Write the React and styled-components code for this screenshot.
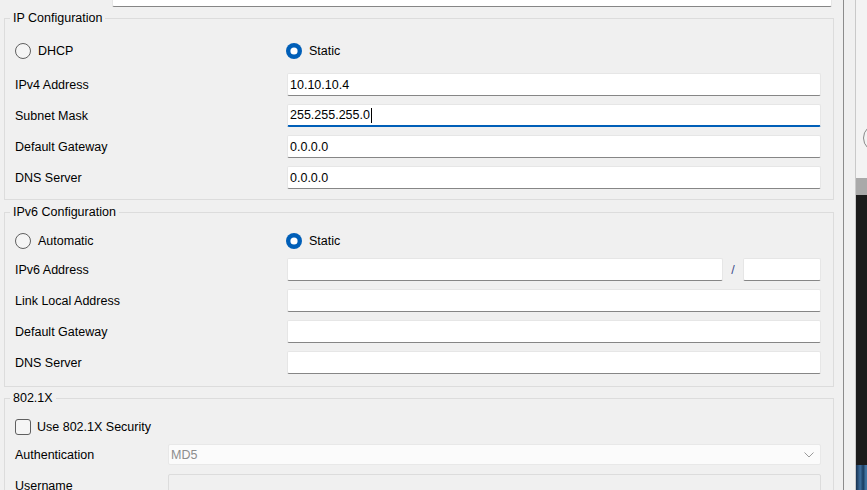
import styled, { createGlobalStyle } from "styled-components";

const GlobalStyle = createGlobalStyle`
  html, body {
    margin: 0;
    padding: 0;
    background: #f0f0f0;
    overflow: hidden;
  }
  body {
    font-family: "Liberation Sans", Arial, sans-serif;
    font-size: 12.5px;
    color: #000;
  }
`;

const Screen = styled.div`
  display: flex;
  width: 867px;
  height: 490px;
  overflow: hidden;
  background: #f0f0f0;
`;

const Dialog = styled.div`
  width: 844px;
  flex-shrink: 0;
  box-sizing: border-box;
  border-right: 1px solid #8c8c8c;
  padding: 0 9px 0 4px;
`;

const Gutter = styled.div`
  width: 11px;
  flex-shrink: 0;
`;

const BackWindow = styled.div`
  flex: 1;
  display: flex;
  flex-direction: column;
  border-left: 1px solid #c9c9c9;
`;

const BackTop = styled.div`
  height: 178px;
  background: #f3f3f3;
  padding-top: 123px;
  box-sizing: border-box;
`;

const BackBar = styled.div`
  height: 17px;
  background: #a9a9a9;
`;

const BackDark = styled.div`
  height: 270px;
  background: #1b1b1b;
`;

const BackImage = styled.div`
  flex: 1;
  background: linear-gradient(90deg, #16304f 0%, #3d6d9c 35%, #1a3a5e 60%, #4a7fb0 85%, #1c3756 100%);
`;

const TopRow = styled.div`
  height: 7px;
  overflow: hidden;
  display: flex;
  align-items: flex-end;
  padding-left: 11px;
`;

const TopLabel = styled.div`
  width: 97px;
  flex-shrink: 0;
  line-height: 23px;
`;

const Group = styled.fieldset`
  margin: ${(p) => p.$mt}px 0 0;
  padding: ${(p) => p.$pt}px 12px ${(p) => p.$pb}px 10px;
  border: 1px solid #dcdcdc;
  min-width: 0;
`;

const Legend = styled.legend`
  padding: 0 3px;
  margin-left: -5px;
  line-height: 15px;
  font-size: 12.5px;
`;

const OptionRow = styled.div`
  display: grid;
  grid-template-columns: ${(p) => p.$labelW}px 1fr;
  align-items: center;
  height: 20px;
  margin-bottom: ${(p) => p.$mb}px;
`;

const FormGrid = styled.div`
  display: grid;
  grid-template-columns: ${(p) => p.$labelW}px 1fr;
  row-gap: ${(p) => p.$gap || 8}px;
  align-items: center;
`;

const Label = styled.div`
  white-space: nowrap;
`;

const Option = styled.label`
  display: flex;
  align-items: center;
  gap: ${(p) => p.$gap || 7}px;
  margin-left: ${(p) => p.$ml || 0}px;
`;

const Field = styled.div`
  height: ${(p) => p.$h || 23}px;
  box-sizing: border-box;
  display: flex;
  align-items: center;
  padding-left: 2px;
  background: ${(p) => (p.$disabled ? "#f0f0f0" : "#fff")};
  border: 1px solid ${(p) => (p.$disabled ? "#dcdcdc" : "#e6e6e6")};
  border-bottom: ${(p) =>
    p.$focused
      ? "2px solid #005fb8"
      : p.$disabled
      ? "1px solid #dcdcdc"
      : "1px solid #868686"};
  border-radius: 2px;
  white-space: nowrap;
  overflow: hidden;
  flex: ${(p) => (p.$w ? "none" : "1")};
  width: ${(p) => (p.$w ? `${p.$w}px` : "auto")};
`;

const Caret = styled.span`
  display: inline-block;
  width: 1px;
  height: 15px;
  background: #000;
  margin-left: 1px;
`;

const SplitCell = styled.div`
  display: flex;
  align-items: center;
`;

const Slash = styled.span`
  width: 20px;
  text-align: center;
  color: #3a4a8a;
`;

const Select = styled.div`
  height: 21px;
  box-sizing: border-box;
  display: flex;
  align-items: center;
  justify-content: space-between;
  padding: 0 6px 0 2px;
  background: #fbfbfb;
  border: 1px solid #e8e8e8;
  border-radius: 2px;
  color: #8d8d8d;
`;

const CheckBox = styled.span`
  width: 16px;
  height: 16px;
  box-sizing: border-box;
  border: 1px solid #5f5f5f;
  border-radius: 3px;
  background: #f5f5f5;
`;

const Radio = ({ checked }) => (
  <svg width="16" height="16" viewBox="0 0 16 16">
    {checked ? (
      <>
        <circle cx="8" cy="8" r="8" fill="#005fb8" />
        <circle cx="8" cy="8" r="3.6" fill="#fff" />
      </>
    ) : (
      <circle cx="8" cy="8" r="7.5" fill="#f5f5f5" stroke="#5f5f5f" strokeWidth="1" />
    )}
  </svg>
);

const Chevron = () => (
  <svg width="10" height="6" viewBox="0 0 10 6">
    <path d="M0.5 0.5 L5 5 L9.5 0.5" fill="none" stroke="#9a9a9a" strokeWidth="1" />
  </svg>
);

const ipv4 = [
  ["IPv4 Address", "10.10.10.4"],
  ["Subnet Mask", "255.255.255.0", true],
  ["Default Gateway", "0.0.0.0"],
  ["DNS Server", "0.0.0.0"],
];

const ipv6 = ["Link Local Address", "Default Gateway", "DNS Server"];

export default function App() {
  return (
    <>
      <GlobalStyle />
      <Screen>
        <Dialog>
          <TopRow>
            <TopLabel>Interface</TopLabel>
            <Field $w={720}>FastEthernet0</Field>
          </TopRow>

          <Group $mt={4} $pt={15} $pb={10}>
            <Legend>IP Configuration</Legend>
            <OptionRow $labelW={272} $mb={12}>
              <Option>
                <Radio />
                DHCP
              </Option>
              <Option $ml={-1}>
                <Radio checked />
                Static
              </Option>
            </OptionRow>
            <FormGrid $labelW={272}>
              {ipv4.map(([label, value, focused]) => (
                <>
                  <Label key={label}>{label}</Label>
                  <Field key={label + "-f"} $focused={focused}>
                    {value}
                    {focused && <Caret />}
                  </Field>
                </>
              ))}
            </FormGrid>
          </Group>

          <Group $mt={5} $pt={11} $pb={12}>
            <Legend>IPv6 Configuration</Legend>
            <OptionRow $labelW={272} $mb={7}>
              <Option>
                <Radio />
                Automatic
              </Option>
              <Option $ml={-1}>
                <Radio checked />
                Static
              </Option>
            </OptionRow>
            <FormGrid $labelW={272}>
              <Label>IPv6 Address</Label>
              <SplitCell>
                <Field />
                <Slash>/</Slash>
                <Field $w={78} />
              </SplitCell>
              {ipv6.map((label) => (
                <>
                  <Label key={label}>{label}</Label>
                  <Field key={label + "-f"} />
                </>
              ))}
            </FormGrid>
          </Group>

          <Group $mt={4} $pt={11} $pb={10}>
            <Legend>802.1X</Legend>
            <OptionRow $labelW={272} $mb={7}>
              <Option $gap={6}>
                <CheckBox />
                Use 802.1X Security
              </Option>
            </OptionRow>
            <FormGrid $labelW={153} $gap={9}>
              <Label>Authentication</Label>
              <Select>
                MD5
                <Chevron />
              </Select>
              <Label>Username</Label>
              <Field $disabled />
            </FormGrid>
          </Group>
        </Dialog>
        <Gutter />
        <BackWindow>
          <BackTop>
            <svg width="12" height="30" viewBox="0 0 12 30">
              <circle cx="21" cy="15" r="13.5" fill="none" stroke="#8a8a8a" strokeWidth="1" />
            </svg>
          </BackTop>
          <BackBar />
          <BackDark />
          <BackImage />
        </BackWindow>
      </Screen>
    </>
  );
}
